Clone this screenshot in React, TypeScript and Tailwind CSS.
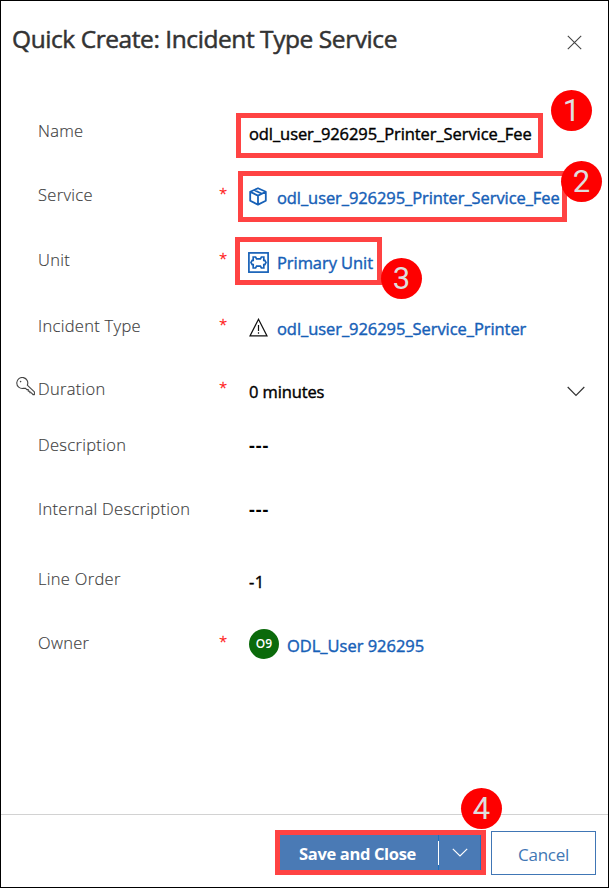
import type { ReactNode } from "react";

const strong = "[-webkit-text-stroke:0.4px_currentColor]";
const linkText = "text-[16.5px] text-[#1660b7] [-webkit-text-stroke:0.4px_currentColor]";

function Field({
  label,
  required = false,
  height,
  icon,
  children,
}: {
  label: string;
  required?: boolean;
  height: string;
  icon?: ReactNode;
  children: ReactNode;
}) {
  return (
    <div className={`flex items-start ${height}`}>
      <div className="flex h-8 w-[37px] shrink-0 items-start justify-end pr-[3px] pt-[4px]">{icon}</div>
      <div className="h-8 w-[180px] shrink-0 whitespace-nowrap text-[16.5px] font-light leading-8 tracking-[0.3px] text-[#3c3c3c] [-webkit-text-stroke:0.15px_currentColor]">
        {label}
      </div>
      <div className="h-8 w-[31px] shrink-0 pl-px text-[15px] font-light leading-[29px] text-[#ff1010] [-webkit-text-stroke:0.3px_currentColor]">
        {required ? "*" : ""}
      </div>
      {children}
    </div>
  );
}

function Value({ children, className = "" }: { children: ReactNode; className?: string }) {
  return <div className={`flex h-8 items-center whitespace-nowrap ${className}`}>{children}</div>;
}

function Badge({ n, className }: { n: number; className: string }) {
  return (
    <div
      className={`absolute flex h-[41px] w-[41px] items-center justify-center rounded-full bg-[#fe0000] font-['Roboto',sans-serif] text-[31px] leading-none text-[#dedede] ${className}`}
    >
      {n}
    </div>
  );
}

function KeyIcon() {
  return (
    <svg width="19" height="19" viewBox="0 0 19 19" fill="none" stroke="#444" strokeWidth="1.1">
      <path d="M11.3 8.200A5.500 5.500 0 1 0 7.200 11.400l2.200-.2 1.400 1.400h1.500v1.600h1.600v1.600h1.500l1.600 1.800h1.400V14.800L11.300 8.200Z" strokeLinejoin="round" />
      <circle cx="4.6" cy="4.6" r="0.8" fill="#444" stroke="none" />
    </svg>
  );
}

function BoxIcon() {
  return (
    <svg width="18" height="19" viewBox="0 0 18 19" fill="none" stroke="#1660b7" strokeWidth="1.8" strokeLinejoin="round">
      <path d="M9 1.200 16.800 4.800v9L9 17.600l-7.800-3.800v-9L9 1.200ZM1.200 4.800 9 8.600l7.800-3.800M9 8.600v9M5.200 3l7.600 3.700" />
    </svg>
  );
}

function UnitIcon() {
  return (
    <svg width="21" height="21" viewBox="0 0 21 21" fill="none" stroke="#1660b7" strokeWidth="1.7">
      <rect x="0.9" y="0.9" width="19.2" height="19.2" />
      <path d="M5.200 5h2.400l1 1.800h3.800l1-1.800h2.400v3.400h1l1.200 2.100-1.200 2.100h-1V16h-2.400l-1-1.800H8.600L7.600 16H5.200v-3.400h-1L3 10.500l1.200-2.100h1V5Z" />
    </svg>
  );
}

function WarningIcon() {
  return (
    <svg width="19" height="19" viewBox="0 0 19 19" fill="none" stroke="#111" strokeWidth="1.2">
      <path d="M9.5 1.3 18 17.9H1L9.5 1.3ZM9.5 7v6M9.5 14.2v1.5" />
    </svg>
  );
}

export default function App() {
  return (
    <div className="relative flex h-[888px] w-[609px] flex-col overflow-hidden border border-black bg-white font-['Open_Sans','Noto_Sans',sans-serif]">
      <header className="flex h-[114px] shrink-0 items-start justify-between pl-[11px] pr-[26px] pt-[22px]">
        <h1 className="whitespace-nowrap text-[24.5px] leading-8 tracking-[-0.43px] text-[#333] [-webkit-text-stroke:0.5px_currentColor]">
          Quick Create: Incident Type Service
        </h1>
        <svg className="mt-[12px]" width="15" height="15" viewBox="0 0 15 15" stroke="#444" strokeWidth="1.1">
          <path d="m.8.8 13.4 13.4M14.2.8.8 14.2" />
        </svg>
      </header>

      <main className="min-h-0 flex-1">
        <Field label="Name" height="h-16">
          <Value className={`mt-[3px] text-[16.5px] tracking-[-0.08px] text-black ${strong}`}>
            odl_user_926295_Printer_Service_Fee
          </Value>
        </Field>
        <Field label="Service" required height="h-[65px]">
          <Value className="mt-[3px]">
            <span className="mb-[3px] w-[28px]"><BoxIcon /></span>
            <span className={`${linkText} tracking-[-0.08px]`}>odl_user_926295_Printer_Service_Fee</span>
          </Value>
        </Field>
        <Field label="Unit" required height="h-[66px]">
          <Value className="mt-[3px]">
            <span className="-ml-px mb-[2px] w-[29px]"><UnitIcon /></span>
            <span className={`${linkText} tracking-[-0.06px]`}>Primary Unit</span>
          </Value>
        </Field>
        <Field label="Incident Type" required height="h-[63px]">
          <Value className="mt-[3px]">
            <span className="mb-[4px] w-[28px]"><WarningIcon /></span>
            <span className={`${linkText} tracking-[-0.06px]`}>odl_user_926295_Service_Printer</span>
          </Value>
        </Field>
        <Field label="Duration" required height="h-14" icon={<KeyIcon />}>
          <Value className="mt-[3px] w-[336px] justify-between">
            <span className={`text-[16.5px] tracking-[-0.12px] ${strong}`}>0 minutes</span>
            <svg className="mb-[2px]" width="18" height="11" viewBox="0 0 18 11" fill="none" stroke="#333" strokeWidth="1.2">
              <path d="m.7 1 8.3 8.3L17.3 1" />
            </svg>
          </Value>
        </Field>
        <Field label="Description" height="h-16">
          <Value className="text-[18px] font-bold tracking-[0.9px]">---</Value>
        </Field>
        <Field label="Internal Description" height="h-[70px]">
          <Value className="text-[18px] font-bold tracking-[0.9px]">---</Value>
        </Field>
        <Field label="Line Order" height="h-16">
          <Value className={`mt-[3px] text-[16.5px] tracking-[0.5px] ${strong}`}>-1</Value>
        </Field>
        <Field label="Owner" required height="h-16">
          <Value className="mt-[3px]">
            <span className="mb-[4px] mr-[8px] flex h-[30px] w-[30px] items-center justify-center rounded-full bg-[#0b6a0b] text-[12px] font-semibold text-white">
              O9
            </span>
            <span className={`${linkText} tracking-[-0.02px]`}>ODL_User 926295</span>
          </Value>
        </Field>
      </main>

      <footer className="flex h-[73px] shrink-0 items-start justify-end gap-[5px] border-t border-[#d2d2d2] pr-3 pt-[15px]">
        <div className="flex h-[45px] w-[211px] border-[5px] border-[#ff4343] bg-[#4a7ab5] text-white">
          <button className="flex w-[159px] items-center justify-center whitespace-nowrap border-r border-[#1e70be] pr-[3px] pt-[3px] text-[16.5px] font-bold tracking-[-0.35px]">
            Save and Close
          </button>
          <button className="flex flex-1 items-center justify-center border-r border-[#1e70be]">
            <svg width="16" height="9" viewBox="0 0 16 9" fill="none" stroke="white" strokeWidth="1.2">
              <path d="m.8.8 7.2 7.2L15.200.8" />
            </svg>
          </button>
        </div>
        <button className="mt-px h-[44px] w-[105px] border border-[#4076b5] pt-[3px] text-[17px] tracking-[-0.3px] text-[#4277b4]">
          Cancel
        </button>
      </footer>

      <div className="absolute left-[437px] top-[840px] h-[24px] w-px bg-white" />
      <div className="absolute left-[235px] top-[112px] h-[45px] w-[307px] border-[5px] border-[#ff4343]" />
      <div className="absolute left-[237px] top-[170px] h-[51px] w-[329px] border-[5px] border-[#ff4343]" />
      <div className="absolute left-[234px] top-[236px] h-[48px] w-[147px] border-[5px] border-[#ff4343]" />
      <Badge n={1} className="left-[550px] top-[89px]" />
      <Badge n={2} className="left-[560px] top-[160px]" />
      <Badge n={3} className="left-[380px] top-[257px]" />
      <Badge n={4} className="left-[460px] top-[787px]" />
    </div>
  );
}
